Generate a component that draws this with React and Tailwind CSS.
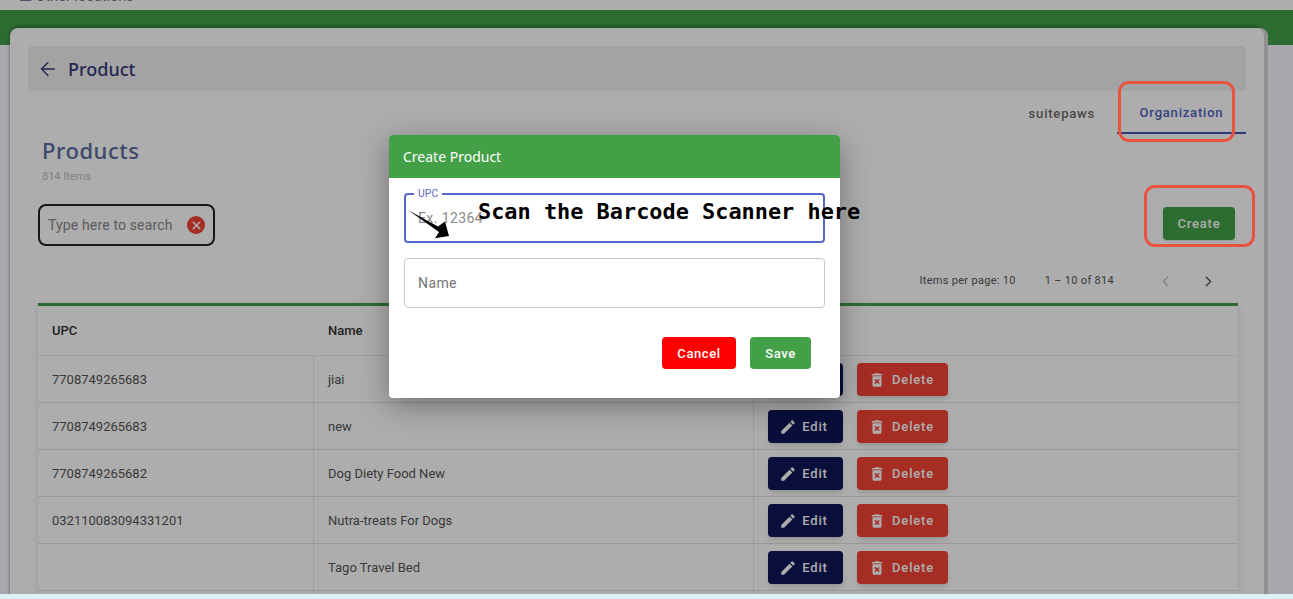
import React from 'react';
import { ArrowLeft, ChevronLeft, ChevronRight, X } from 'lucide-react';

const rows = [
    { upc: '7708749265683', name: 'jiai' },
    { upc: '7708749265683', name: 'new' },
    { upc: '7708749265682', name: 'Dog Diety Food New' },
    { upc: '032110083094331201', name: 'Nutra-treats For Dogs' },
    { upc: '', name: 'Tago Travel Bed' },
];

const EditIcon = () => (
    <svg viewBox="0 0 24 24" className="h-[18px] w-[18px]" fill="currentColor">
        <path d="M3 17.25V21h3.75L17.81 9.94l-3.75-3.75L3 17.25zM20.71 7.04a1 1 0 000-1.41l-2.34-2.34a1 1 0 00-1.41 0l-1.83 1.83 3.75 3.75 1.83-1.83z" />
    </svg>
);

const DeleteIcon = () => (
    <svg viewBox="0 0 24 24" className="h-[18px] w-[18px]" fill="currentColor">
        <path d="M6 19c0 1.1.9 2 2 2h8c1.1 0 2-.9 2-2V7H6v12zm2.46-7.12l1.41-1.41L12 12.59l2.12-2.12 1.41 1.41L13.41 14l2.12 2.12-1.41 1.41L12 15.41l-2.12 2.12-1.41-1.41L10.59 14l-2.13-2.12zM15.5 4l-1-1h-5l-1 1H5v2h14V4h-3.5z" />
    </svg>
);

const Row = ({ upc, name }) => (
    <div className="grid h-[47px] grid-cols-[275px_440px_1fr] border-b border-[#e2e2e2] text-[13px] text-[#555]">
        <div className="flex items-center pl-[14px] pt-[1px]">{upc}</div>
        <div className="flex items-center border-l border-[#e8e8e8] pl-[14px] pt-[1px]">{name}</div>
        <div className="flex items-center gap-[14px] border-l border-[#e8e8e8] pl-[14px]">
            <button className="flex h-[33px] w-[75px] items-center justify-center gap-[5px] rounded bg-[#0f1557] pr-[4px] pt-[1px] text-[13px] font-medium tracking-[0.8px] text-white shadow-md">
                <EditIcon />
                Edit
            </button>
            <button className="flex h-[33px] w-[91px] items-center justify-center gap-[6px] rounded bg-[#f44336] pr-[3px] pt-[1px] text-[13px] font-medium tracking-[0.8px] text-white shadow-md">
                <DeleteIcon />
                Delete
            </button>
        </div>
    </div>
);

export default function App() {
    return (
        <div className="relative h-[599px] w-[1293px] overflow-hidden bg-[#f8f9ff] font-['Roboto',sans-serif]">
            {/* page behind the dialog */}
            <div className="h-[10px] overflow-hidden bg-white">
                <div className="-mt-[11px] pl-[19px] text-[14.5px] leading-[16px] text-[#6d7699]">☰ Other locations</div>
            </div>
            <div className="h-[35px] bg-[#43a047]"></div>

            <div className="relative -mt-[17px] ml-[10px] w-[1254px] rounded-t-lg bg-white px-[18px] pt-[18px] shadow-[4px_0_0_#d6d6d6,0_-1px_4px_rgba(0,0,0,0.4)]">
                <div className="flex h-[45px] items-center gap-[9px] rounded bg-[#f1f1f1] pl-[9px] text-[#353a7a]">
                    <ArrowLeft size={22} strokeWidth={1.5} />
                    <span className="pt-[1px] font-['Noto_Sans',sans-serif] text-[18px] font-medium">Product</span>
                </div>

                <div className="flex h-[43px] justify-end">
                    <div className="flex items-center px-[22px] pt-[3px] text-[13px] font-medium tracking-[0.8px] text-[#6b6b6b]">suitepaws</div>
                    <div className="flex w-[129px] items-center justify-center border-b-2 border-[#4555b5] pt-[3px] text-[13px] font-medium tracking-[0.8px] text-[#5060c0]">Organization</div>
                </div>

                <div className="pl-[14px] pt-[1px]">
                    <h1 className="font-['Noto_Sans',sans-serif] text-[22px] font-medium leading-[30px] tracking-[0.55px] text-[#5a6a9e]">Products</h1>
                    <p className="mt-[5px] text-[11px] leading-[14px] text-[#bdbdbd]">814 Items</p>
                </div>

                <div className="mt-[20px] flex items-start justify-between pl-[10px] pr-[11px]">
                    <div className="flex h-[42px] w-[177px] items-center justify-between rounded-lg border-2 border-[#222] pl-[8px] pr-[8px]">
                        <span className="text-[14px] tracking-[0.15px] text-[#888]">Type here to search</span>
                        <span className="flex h-[18px] w-[18px] items-center justify-center rounded-full bg-[#f44336] text-white">
                            <X size={13} strokeWidth={3} />
                        </span>
                    </div>
                    <button className="mt-[3px] h-[33px] w-[72px] rounded bg-[#43a047] text-[13px] font-medium tracking-[0.8px] text-white shadow-sm">Create</button>
                </div>

                <div className="mt-[19px] flex h-[32px] items-center justify-end pr-[29px] text-[11px] tracking-[0.3px] text-[#555]">
                    <span>Items per page: 10</span>
                    <span className="ml-[29px]">1 – 10 of 814</span>
                    <ChevronLeft size={17} className="ml-[43px] text-[#c4c4c4]" />
                    <ChevronRight size={17} className="ml-[26px] text-[#555]" />
                </div>

                <div className="ml-[10px] mt-[6px] w-[1200px] border-t-[3px] border-[#43a047] shadow-[0_2px_6px_rgba(0,0,0,0.12)]">
                    <div className="grid h-[50px] grid-cols-[275px_440px_1fr] border-b border-[#ececec] text-[13px] font-medium text-[#323232]">
                        <div className="flex items-center pl-[14px]">UPC</div>
                        <div className="flex items-center pl-[15px]">Name</div>
                        <div></div>
                    </div>
                    {rows.map((row, index) => (
                        <Row key={index} upc={row.upc} name={row.name} />
                    ))}
                    {/* next row starts right above the fold, only its cell lines show */}
                    <div className="grid h-[47px] grid-cols-[275px_440px_1fr]">
                        <div></div>
                        <div className="border-l border-[#e8e8e8]"></div>
                        <div className="border-l border-[#e8e8e8]"></div>
                    </div>
                </div>
            </div>

            {/* dialog backdrop */}
            <div className="absolute inset-0 bg-black/32"></div>

            <div className="absolute left-[389px] top-[135px] h-[263px] w-[451px] overflow-hidden rounded bg-white shadow-[0_8px_30px_rgba(0,0,0,0.35)]">
                <div className="flex h-[43px] items-center bg-[#43a047] pl-[14px] font-['Noto_Sans',sans-serif] text-[14px] text-white">Create Product</div>
                <div className="px-[15px] pt-[15px]">
                    <div className="relative flex h-[50px] items-center rounded border-2 border-[#5567c8] pl-[12px] text-[14px] tracking-[0.4px] text-[#8a8a8a]">
                        <span className="absolute -top-[7px] left-[8px] bg-white px-[4px] text-[10.5px] leading-[12px] tracking-normal text-[#5c6bc0]">UPC</span>
                        <span className="pt-[1px]">Ex. 12364</span>
                    </div>
                    <div className="mt-[15px] flex h-[50px] items-center rounded border border-[#c8c8c8] pl-[13px] pt-[1px] text-[14px] tracking-[0.4px] text-[#757575]">Name</div>
                    <div className="mt-[29px] flex justify-end gap-[14px] pr-[14px]">
                        <button className="h-[32px] w-[74px] rounded bg-[#ff0000] pt-[1px] text-[13px] font-medium tracking-[0.6px] text-white">Cancel</button>
                        <button className="h-[32px] w-[61px] rounded bg-[#43a047] pt-[1px] text-[13px] font-medium tracking-[0.6px] text-white">Save</button>
                    </div>
                </div>
            </div>

            {/* annotations drawn on top of the screenshot */}
            <div className="absolute left-[1118px] top-[81px] h-[61px] w-[117px] rounded-[11px] border-[3px] border-[#e8533f]"></div>
            <div className="absolute left-[1144px] top-[185px] h-[62px] w-[111px] rounded-[11px] border-[3px] border-[#e8533f]"></div>
            <div className="absolute left-[478px] top-[199px] whitespace-nowrap font-['DejaVu_Sans_Mono',monospace] text-[21.9px] font-bold leading-[26px] text-black">Scan the Barcode Scanner here</div>
            <svg className="absolute left-[405px] top-[206px]" width="48" height="36" viewBox="405 206 48 36">
                <polygon points="408.3,210.3 438,226.5 445,221.5 449,236 435,238.3 439,232" fill="#000" />
            </svg>

            {/* strip of the window below */}
            <div className="absolute inset-x-0 bottom-0 h-[5px] bg-[#e0f0f7]"></div>
        </div>
    );
}
